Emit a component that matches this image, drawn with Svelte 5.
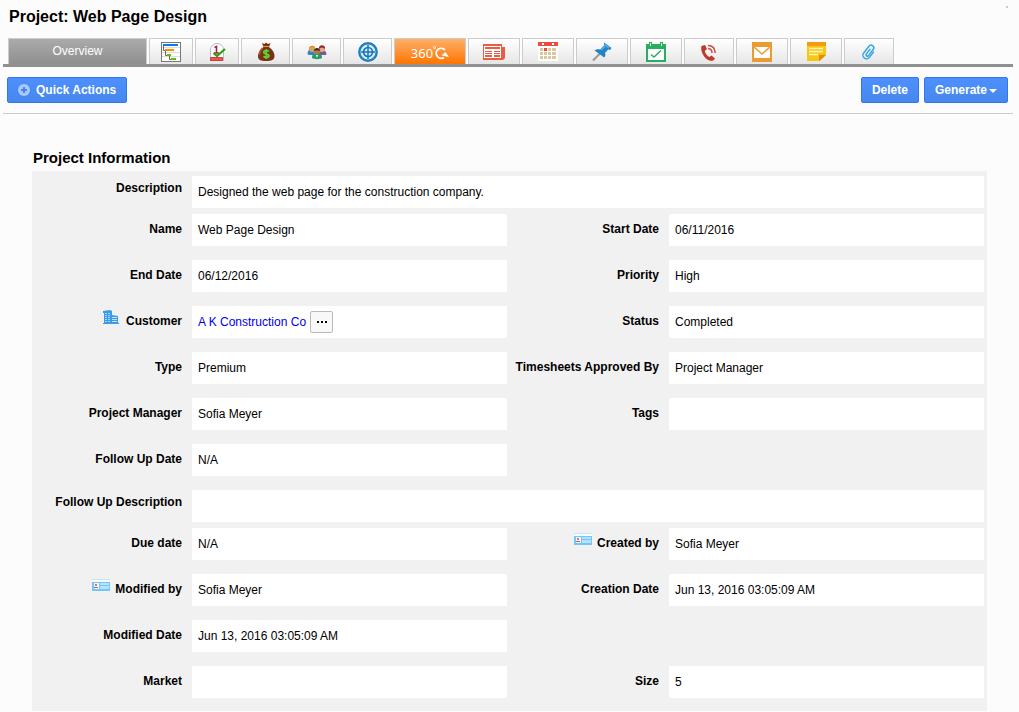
<script>
  const tabs = [
    { id: 'gantt', title: 'Gantt', size: 'small' },
    { id: 'milestone', title: 'Milestones', size: 'small' },
    { id: 'money', title: 'Billing', size: 'medium' },
    { id: 'team', title: 'Team', size: 'medium' },
    { id: 'target', title: 'Targets', size: 'medium' },
    { id: 'around', title: '360', size: 'wide' },
    { id: 'news', title: 'News', size: 'large' },
    { id: 'calendar', title: 'Calendar', size: 'large' },
    { id: 'pin', title: 'Pinned', size: 'large' },
    { id: 'task', title: 'Tasks', size: 'large' },
    { id: 'call', title: 'Calls', size: 'regular' },
    { id: 'mail', title: 'Emails', size: 'large' },
    { id: 'note', title: 'Notes', size: 'large' },
    { id: 'clip', title: 'Attachments', size: 'regular' }
  ];

  const rows = [
    { full: true, fields: [{ label: 'Description', value: 'Designed the web page for the construction company.' }] },
    { fields: [{ label: 'Name', value: 'Web Page Design' }, { label: 'Start Date', value: '06/11/2016' }] },
    { fields: [{ label: 'End Date', value: '06/12/2016' }, { label: 'Priority', value: 'High' }] },
    {
      fields: [
        { label: 'Customer', value: 'A K Construction Co', icon: 'building', link: true },
        { label: 'Status', value: 'Completed' }
      ]
    },
    { fields: [{ label: 'Type', value: 'Premium' }, { label: 'Timesheets Approved By', value: 'Project Manager' }] },
    { fields: [{ label: 'Project Manager', value: 'Sofia Meyer' }, { label: 'Tags', value: '' }] },
    { fields: [{ label: 'Follow Up Date', value: 'N/A' }] },
    { full: true, fields: [{ label: 'Follow Up Description', value: '' }] },
    { fields: [{ label: 'Due date', value: 'N/A' }, { label: 'Created by', value: 'Sofia Meyer', icon: 'card' }] },
    {
      fields: [
        { label: 'Modified by', value: 'Sofia Meyer', icon: 'card' },
        { label: 'Creation Date', value: 'Jun 13, 2016 03:05:09 AM' }
      ]
    },
    { fields: [{ label: 'Modified Date', value: 'Jun 13, 2016 03:05:09 AM' }] },
    { fields: [{ label: 'Market', value: '' }, { label: 'Size', value: '5' }] }
  ];
</script>

{#snippet tabIcon(id)}
  <svg width="20" height="20" viewBox="0 0 20 20" aria-hidden="true">
    {#if id === 'gantt'}
      <rect x=".5" y=".5" width="19" height="19" fill="#fff" stroke="#777" />
      <path d="M1 5.5h18M1 10.5h18M1 14.5h18" stroke="#ddd" />
      <path d="M2.5 4v4.5h2M4.500 9v4.500h2M8.500 14v3.500h2" fill="none" stroke="#666" />
      <path fill="#0a78ff" d="M2 2h15v2H2z" />
      <path fill="#ff8c00" d="M4 7h9v2H4z" />
      <path fill="#62bd08" d="M6 12h4v2H6zM10 16h5v2h-5z" />
    {:else if id === 'milestone'}
      <path d="M3.500 18.500V8a6.500 6.500 0 0 1 13 0v10.500z" fill="#fff" stroke="#b5b9ca" />
      <path d="M3.500 15.500h12v3h-12z" fill="#ef5350" stroke="#c94040" />
      <path d="M7.500 5.500L9.500 4.500v7M7 11h5" fill="none" stroke="#a52634" stroke-width="1.600" />
      <path d="M6.500 11l3.500 3L18 7" fill="none" stroke="#2f9e13" stroke-width="2.200" />
    {:else if id === 'money'}
      <path d="M6 1l2.500 1L10 .5l2 1.500 2.500-1L13 5c4 3 5.500 6 5.500 9 0 4-3 5-8.500 5s-8-1-8-5c0-3 2-6.500 5.500-9z" fill="#7a3212" />
      <path d="M6.500 6c-2 2-3 4-3 7" fill="none" stroke="#a95b30" stroke-width="1.500" />
      <path d="M7 4.500h6" stroke="#d19a62" />
      <path d="M12.800 9.500c-1-1.500-5-1.300-5 .8 0 2.400 5.200 1.200 5.200 3.500 0 2-4.200 2.300-5.400.5M10.300 7v10" fill="none" stroke="#58d834" stroke-width="1.700" />
    {:else if id === 'team'}
      <path d="M.5 12c0-4 2-5 4.500-4s3 4 2 5H2z" fill="#2e83c9" />
      <path d="M12 12c0-4 2-5 4.500-4S20 11 19 13h-6z" fill="#8154a2" />
      <circle cx="5" cy="7" r="3" fill="#d9a15f" />
      <path d="M2 7c0-4 6-4.500 6-1-2-1-4-1-6 1z" fill="#df8d16" />
      <circle cx="15" cy="7" r="3" fill="#dfac85" />
      <path d="M12 7c-1-5 7-5 6 0-2-2-4-2-6 0z" fill="#922f22" />
      <path d="M5 16c0-4 2-5 5-5s5 1 5 5c-2 1.500-8 1.500-10 0z" fill="#1e9c6c" />
      <circle cx="10" cy="9.500" r="3" fill="#b67646" />
      <path d="M7 9c0-4 6-4 6 0-2-1-4-1-6 0z" fill="#3d2922" />
      <path d="M9 13l1 3 1-3z" fill="#fff" />
    {:else if id === 'target'}
      <circle cx="10" cy="10" r="8.700" fill="#d9effb" stroke="#1f7fc4" stroke-width="2.400" />
      <circle cx="10" cy="10" r="4.500" fill="none" stroke="#1976ba" stroke-width="1.700" />
      <path d="M10 3v14M3 10h14" stroke="#1976ba" stroke-width="1.500" />
    {:else if id === 'calendar'}
      <path fill="#fff" d="M0 4h20v15H0z" />
      <path fill="#e74c3c" d="M0 0h20v4H0z" />
      <path d="M4 2h2M14 2h2" stroke="#fff" stroke-width="2" />
      <path d="M2 7.500h3M6 7.500h3M10 7.500h3M14 7.500h4M2 11.500h3M6 11.500h3M10 11.500h3M14 11.500h4M2 15.500h3M6 15.500h3M10 15.500h3M14 15.500h4" stroke="#d8c89b" stroke-width="3" />
      <path fill="#e74c3c" d="M6 6h3v3H6z" />
    {:else if id === 'pin'}
      <path d="M1 18.500L8 11.500" stroke="#999" stroke-width="2" />
      <path d="M12 .5L19.500 6l-1.500 2-1.800-.5-3.200 3.500c.8 2 .5 3-.8 4.500L2.500 8.500C4.500 7 6 7 8.200 7.500L12 3.500z" fill="#2484ca" />
      <path d="M12.500 2.500L17 6M9 8l4-4" fill="none" stroke="#59afe8" stroke-width="1.500" />
    {:else if id === 'task'}
      <path fill="#27ae60" d="M0 2h3V0h3v2h8V0h3v2h3v18H0z" />
      <path fill="#fff" d="M2 7h16v11H2z" />
      <path d="M4.500 1v3M15.500 1v3" stroke="#d9fce7" />
      <path d="M5 12.500l3 2.500L15 8.500" fill="none" stroke="#27ae60" stroke-width="1.400" />
    {:else if id === 'call'}
      <path d="M2.500 4L6 3l2 4-2.200 2c.6 2.800 2.200 4.800 4.500 6l2.200-1.500 3.500 3c-1 2-3 2.800-5.500 2C5.500 17 1 9.500 2.500 4z" fill="#c0392b" />
      <path d="M9 6.500c2.500.2 4 2 4 4.500M9 3.500c4.500 0 7 3 7.200 7.500" fill="none" stroke="#c84f42" stroke-width="1.500" />
    {:else if id === 'mail'}
      <path fill="#eb9b32" d="M0 0h20v20H0z" />
      <path fill="#fff" d="M2 5h16v11H2z" />
      <path d="M2 5l8 7 8-7" fill="none" stroke="#eb9b32" stroke-width="1.500" />
    {:else if id === 'note'}
      <path fill="#f5c816" d="M1 0h19v13l-6 6H1z" />
      <path fill="#f29b16" d="M1 0h19v4H1z" />
      <path d="M3 6.500h14M3 9.500h14M3 12.500h9" stroke="#fff3b0" stroke-width="1.500" />
      <path fill="#e88615" d="M13 13h7l-7 6z" />
    {:else if id === 'clip'}
      <path
        d="M14 7v7.500a4 4 0 0 1-8 0V5a3 3 0 0 1 6 0v8.500a1.500 1.500 0 0 1-3 0V7"
        transform="rotate(38 10 10) translate(1 1) scale(.9)"
        fill="none"
        stroke="#2aa5e8"
        stroke-width="1.600"
        stroke-linecap="round"
      />
    {/if}
  </svg>
{/snippet}

{#snippet labelIcon(name)}
  {#if name === 'building'}
    <svg class="label-icon" width="18" height="16" viewBox="0 0 18 16" aria-hidden="true">
      <path fill="#3d9be5" d="M0 1l7-1 2 1v4l6 1v7h1v1H0v-1h1V3H0z" />
      <path d="M2 3.500h5M2 5.500h5M2 7.500h5M2 9.500h5M2 11.500h5" stroke="#a2d5fa" stroke-dasharray="2 1" />
      <path d="M9 7.500h5M9 9.500h5M9 11.500h5" stroke="#bfe2fb" />
    </svg>
  {:else}
    <svg class="label-icon" width="18" height="16" viewBox="0 0 18 16" aria-hidden="true">
      <path fill="#c8e5ef" d="M0 1h18v1H0z" />
      <path fill="#f7fcff" d="M0 2h18v2H0z" />
      <path fill="#74c6fa" d="M0 4h18v9H0z" />
      <path fill="#eef8ff" d="M2 5h5v6H2z" />
      <path fill="#b5e2ff" d="M8 5h9v2H8zM8 8h9v3H8z" />
      <circle cx="4" cy="7" r="1" fill="#c84f42" />
      <path fill="#a76961" d="M2 9h4v1H2z" />
    </svg>
  {/if}
{/snippet}

<div class="page">
  <header>
    <h1>Project: Web Page Design</h1>
    <span class="dot"></span>
  </header>

  <nav>
    <a class="tab overview" href="#overview" aria-current="page">Overview</a>
    {#each tabs as tab}
      <a class="tab {tab.size}" href="#{tab.id}" aria-label={tab.title}>
        {#if tab.id === 'around'}
          <span>360</span>
          <svg width="16" height="16" viewBox="0 0 16 16" aria-hidden="true">
            <circle cx="1.500" cy="2.500" r="1" fill="none" stroke="#fff" />
            <path d="M12 5a5 5 0 1 0-1 7.500" fill="none" stroke="#fff" stroke-width="1.800" />
            <path d="M8.500 10.500l4-3.500 3.500 5z" fill="#fff" />
          </svg>
        {:else if tab.id === 'news'}
          <svg width="22" height="16" viewBox="0 0 22 16" aria-hidden="true">
            <path fill="#e85d43" d="M0 0h19v3h3v11l-2 2H0z" />
            <path fill="#fff" d="M1 2h17v12H1z" />
            <path fill="#e85d43" d="M2 3h15v2H2zM2 7h7v1H2zM2 9h7v1H2zM2 11h7v2H2zM11 7h6v1h-6zM11 9h6v1h-6zM11 11h6v2h-6z" />
          </svg>
        {:else}
          {@render tabIcon(tab.id)}
        {/if}
      </a>
    {/each}
  </nav>

  <div class="toolbar">
    <button class="btn quick">
      <svg width="12" height="12" viewBox="0 0 12 12" aria-hidden="true">
        <circle cx="6" cy="6" r="6" fill="#a9c8fb" />
        <path d="M6 3v6M3 6h6" stroke="#4d83e3" stroke-width="2" />
      </svg>
      Quick Actions
    </button>
    <div class="actions">
      <button class="btn">Delete</button>
      <button class="btn">Generate <span class="caret"></span></button>
    </div>
  </div>

  <section>
    <h2>Project Information</h2>
    <dl>
      {#each rows as row}
        <div class="row" class:full={row.full}>
          {#each row.fields as field}
            <dt>
              {#if field.icon}{@render labelIcon(field.icon)}{/if}
              {field.label}
            </dt>
            <dd>
              {#if field.link}
                <a href="#customer">{field.value}</a>
                <button class="more" aria-label="More"><i></i><i></i><i></i></button>
              {:else}
                {field.value}
              {/if}
            </dd>
          {/each}
        </div>
      {/each}
    </dl>
  </section>
</div>

<style>
  :global(body) {
    background: #fcfcfc;
  }

  .page {
    padding: 0 6px 0 3px;
    font-family: 'Liberation Sans', Arial, sans-serif;
    font-size: 12px;
    color: #000;
  }

  header {
    display: flex;
    justify-content: space-between;
    height: 38px;
    padding: 6px 5px 0 6px;
    box-sizing: border-box;
  }

  h1 {
    margin: 0;
    font-size: 16px;
    line-height: 21px;
  }

  .dot {
    width: 2px;
    height: 2px;
    background: #ccc;
  }

  /* Tabs */
  nav {
    display: flex;
    gap: 2px;
    padding-left: 5px;
    border-bottom: 3px solid #909090;
  }

  .tab {
    display: flex;
    align-items: center;
    justify-content: center;
    box-sizing: border-box;
    height: 26px;
    border: 1px solid #ccc;
    border-bottom: 0;
    background: linear-gradient(#fff, #e6e6e6);
    text-decoration: none;
  }

  .small {
    width: 44px;
  }

  .medium {
    width: 49px;
  }

  .regular {
    width: 50px;
  }

  .large {
    width: 52px;
  }

  .overview {
    width: 139px;
    padding-bottom: 2px;
    background: linear-gradient(#ababab, #8f8f8f);
    color: #fff;
  }

  .wide {
    width: 72px;
    padding-top: 2px;
    background: linear-gradient(#ffb06a, #ff7500);
    color: #fff;
    font-family: 'Noto Sans', sans-serif;
    font-size: 13px;
  }

  /* Buttons */
  .toolbar {
    display: flex;
    justify-content: space-between;
    padding: 10px 5px 10px 4px;
    border-bottom: 1px solid #ccc;
  }

  .actions {
    display: flex;
    gap: 5px;
  }

  .btn {
    display: flex;
    align-items: center;
    height: 26px;
    padding: 0 10px;
    border: 1px solid #3079ed;
    border-radius: 2px;
    background: linear-gradient(#4d90fe, #4787ed);
    color: #fff;
    font: bold 12px 'Liberation Sans', Arial, sans-serif;
    cursor: pointer;
  }

  .quick {
    gap: 6px;
  }

  .caret {
    margin: 2px 0 0 2px;
    border: 4px solid transparent;
    border-top-color: #fff;
    border-bottom: 0;
  }

  /* Details */
  section {
    margin: 34px 26px 0 29px;
  }

  h2 {
    margin: 0 0 3px;
    padding-left: 1px;
    font-size: 15px;
    line-height: 20px;
  }

  dl {
    margin: 0;
    padding: 5px 3px 13px 0;
    background: #f1f1f1;
  }

  .row {
    display: grid;
    grid-template-columns: 160px 1fr 162px 1fr;
    margin-bottom: 14px;
  }

  .row:last-child {
    margin-bottom: 0;
  }

  .row.full {
    grid-template-columns: 160px 1fr;
    margin-bottom: 6px;
  }

  dt {
    display: flex;
    justify-content: flex-end;
    padding-right: 10px;
    font-weight: bold;
    line-height: 30px;
    white-space: nowrap;
  }

  .full dt {
    line-height: 24px;
  }

  .label-icon {
    margin: 4px 5px 0 0;
  }

  dd {
    display: flex;
    align-items: center;
    gap: 4px;
    margin: 0;
    padding: 0 6px;
    min-height: 32px;
    background: #fff;
  }

  dd a {
    color: #00e;
    text-decoration: none;
  }

  .more {
    display: flex;
    align-items: center;
    justify-content: center;
    gap: 2px;
    width: 23px;
    height: 22px;
    padding: 0;
    border: 1px solid #bbb;
    border-radius: 2px;
    background: #f8f8f8;
  }

  .more i {
    width: 2px;
    height: 2px;
    background: #000;
  }
</style>
